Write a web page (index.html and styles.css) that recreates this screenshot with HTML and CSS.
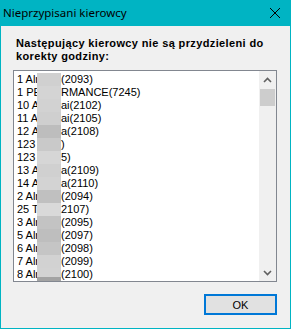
FILE: index.html
```html
<!DOCTYPE html>
<html lang="pl">
<head>
    <meta charset="UTF-8">
    <title>Nieprzypisani kierowcy</title>
    <link rel="stylesheet" href="styles.css">
</head>
<body>
    <div class="window">
        <div class="titlebar">
            <span class="title">Nieprzypisani kierowcy</span>
            <svg class="close" width="10" height="10" viewBox="0 0 10 10">
                <path d="M0 0 L10 10 M10 0 L0 10" stroke="#000" stroke-width="1"/>
            </svg>
        </div>
        <div class="content">
            <p class="prompt">Następujący kierowcy nie są przydzieleni do korekty godziny:</p>
            <div class="listbox">
                <ul class="items">
                    <li><span class="head">1 Alr</span><span class="mask g1"></span><span>(2093)</span></li>
                    <li><span class="head">1 PERF</span><span class="mask g2"></span><span>RMANCE(7245)</span></li>
                    <li><span class="head">10 Ar</span><span class="mask g3"></span><span>ai(2102)</span></li>
                    <li><span class="head">11 Ar</span><span class="mask g4"></span><span>ai(2105)</span></li>
                    <li><span class="head">12 Ar</span><span class="mask g5"></span><span>a(2108)</span></li>
                    <li><span class="head">123 </span><span class="mask g6"></span><span>)</span></li>
                    <li><span class="head">123 </span><span class="mask g7"></span><span>5)</span></li>
                    <li><span class="head">13 Ar</span><span class="mask g8"></span><span>a(2109)</span></li>
                    <li><span class="head">14 Ar</span><span class="mask g9"></span><span>a(2110)</span></li>
                    <li><span class="head">2 Alr</span><span class="mask g10"></span><span>(2094)</span></li>
                    <li><span class="head">25 T</span><span class="mask g11"></span><span>2107)</span></li>
                    <li><span class="head">3 Alr</span><span class="mask g12"></span><span>(2095)</span></li>
                    <li><span class="head">5 Alr</span><span class="mask g13"></span><span>(2097)</span></li>
                    <li><span class="head">6 Alr</span><span class="mask g14"></span><span>(2098)</span></li>
                    <li><span class="head">7 Alr</span><span class="mask g15"></span><span>(2099)</span></li>
                    <li><span class="head">8 Alr</span><span class="mask g16"></span><span>(2100)</span></li>
                    <li><span class="head">9 Alr</span><span class="mask g1"></span><span>(2101)</span></li>
                </ul>
                <div class="scrollbar">
                    <div class="arrow">
                        <svg width="17" height="17" viewBox="0 0 17 17"><path d="M5 11 L8.5 7.5 L12 11" fill="none" stroke="#606060" stroke-width="1.6"/></svg>
                    </div>
                    <div class="track"><div class="thumb"></div></div>
                    <div class="arrow">
                        <svg width="17" height="17" viewBox="0 0 17 17"><path d="M5 7 L8.5 10.5 L12 7" fill="none" stroke="#606060" stroke-width="1.6"/></svg>
                    </div>
                </div>
            </div>
            <div class="actions">
                <button class="btn" type="button">OK</button>
            </div>
        </div>
    </div>
</body>
</html>
```

FILE: styles.css
```css
/* Global */
body {
    margin: 0;
    font-family: "Liberation Sans", Arial, sans-serif;
    font-size: 11px;
    color: #000;
    background: #f0f0f0;
}

/* Window frame */
.window {
    width: 291px;
    height: 329px;
    box-sizing: border-box;
    border: 1px solid #00b4c3;
    border-top: none;
    background-color: #f0f0f0;
    display: flex;
    flex-direction: column;
}

.titlebar {
    height: 26px;
    background-color: #00b4c3;
    display: flex;
    align-items: center;
    justify-content: space-between;
    padding: 0 10px 0 2px;
}

.title {
    font-family: "Noto Sans", "Open Sans", sans-serif;
    font-size: 11.5px;
    position: relative;
    top: -1px;
}

.close {
    display: block;
}

/* Dialog body */
.content {
    padding: 11px 13px 0 12px;
    display: flex;
    flex-direction: column;
}

.prompt {
    margin: 0;
    padding-left: 3px;
    font-weight: bold;
    line-height: 13px;
    letter-spacing: 0.37px;
}

/* List box */
.listbox {
    margin-top: 7px;
    height: 212px;
    box-sizing: border-box;
    border: 1px solid #828790;
    background-color: #fff;
    display: flex;
    overflow: hidden;
}

.items {
    flex: 1;
    list-style: none;
    margin: 0;
    padding: 2px 0 0 3px;
    overflow: hidden;
}

.items li {
    display: grid;
    grid-template-columns: 20px 24px auto;
    height: 13px;
    line-height: 13px;
    white-space: nowrap;
}

.head {
    overflow: hidden;
}

.mask {
    height: 13px;
    background-color: #d0d0d0;
}

.g1 { background-color: #d0d0d0; }
.g2 { background-color: #d4d4d4; }
.g3 { background-color: #d2d2d2; }
.g4 { background-color: #cfcfcf; }
.g5 { background-color: #bdbdbd; }
.g6 { background-color: #c9c9c9; }
.g7 { background-color: #d6d6d6; }
.g8 { background-color: #d0d0d0; }
.g9 { background-color: #d3d3d3; }
.g10 { background-color: #c0c0c0; }
.g11 { background-color: #d9d9d9; }
.g12 { background-color: #c3c3c3; }
.g13 { background-color: #bebebe; }
.g14 { background-color: #c5c5c5; }
.g15 { background-color: #d2d2d2; }
.g16 { background-color: #d3d3d3; border-bottom: 4px solid #a3a3a3; box-sizing: border-box; }

/* Scroll bar */
.scrollbar {
    width: 17px;
    background-color: #f0f0f0;
    display: flex;
    flex-direction: column;
}

.arrow {
    height: 17px;
}

.arrow svg {
    display: block;
}

.track {
    flex: 1;
    padding: 1px 1px 0 1px;
}

.thumb {
    height: 17px;
    background-color: #cdcdcd;
}

/* Buttons */
.actions {
    display: flex;
    justify-content: flex-end;
    margin-top: 12px;
}

.btn {
    width: 73px;
    height: 21px;
    margin: 0;
    padding: 0;
    border: 2px solid #0078d7;
    background-color: #e1e1e1;
    font-family: "Liberation Sans", Arial, sans-serif;
    font-size: 11px;
    color: #000;
}
```
